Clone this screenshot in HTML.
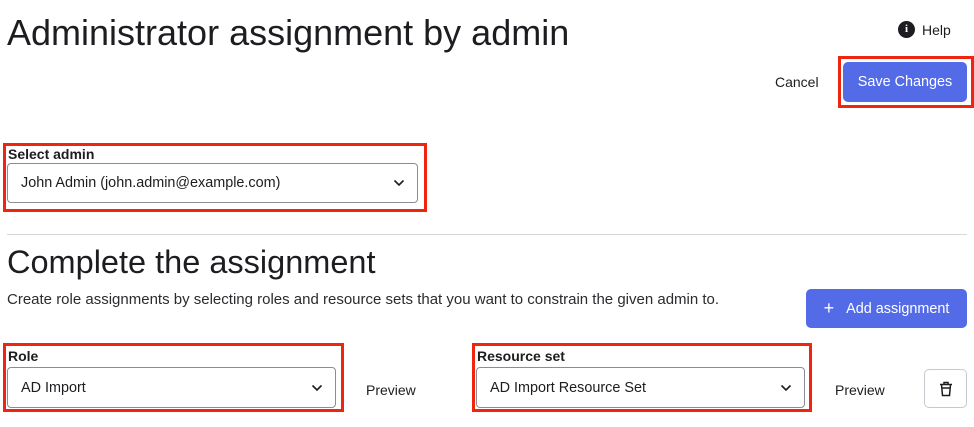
<!DOCTYPE html>
<html><head><style>
*{box-sizing:border-box;margin:0;padding:0}
body{width:974px;height:427px;background:#fff;font-family:"Liberation Sans",sans-serif;color:#1d1d21;position:relative;overflow:hidden}
.a{position:absolute}
.red{position:absolute;border:3px solid #f0250f}
.sel{position:absolute;border:1px solid #8c8c96;border-radius:4px;background:#fff;font-size:14.4px;padding-left:13px;display:flex;align-items:center}
.sel svg{position:absolute;right:12px;top:50%;margin-top:-4px}
.lbl{position:absolute;font-size:14px;font-weight:bold}
.btn{position:absolute;background:#546be7;color:#fff;border-radius:5px;font-size:14.4px;display:flex;align-items:center;justify-content:center}
</style></head><body>
<div class="a" style="left:7px;top:12px;font-size:36px;">Administrator assignment by admin</div>
<div class="a" style="left:898px;top:21px;width:17px;height:17px;border-radius:50%;background:#1d1d21;color:#fff;font-size:11px;font-weight:bold;text-align:center;line-height:17px;font-family:'Liberation Serif',serif">i</div>
<div class="a" style="left:922px;top:22px;font-size:14px">Help</div>
<div class="a" style="left:775px;top:74px;font-size:14px">Cancel</div>
<div class="red" style="left:838px;top:56px;width:136px;height:52px"></div>
<div class="btn" style="left:843px;top:62px;width:124px;height:40px">Save Changes</div>

<div class="red" style="left:3px;top:143px;width:424px;height:69px"></div>
<div class="lbl" style="left:8px;top:146px">Select admin</div>
<div class="sel" style="left:7px;top:163px;width:411px;height:40px">John Admin (john.admin@example.com)<svg width="12" height="8" viewBox="0 0 12 8"><path d="M1.5 1.5 6 6l4.5-4.5" fill="none" stroke="#1d1d21" stroke-width="1.6"/></svg></div>

<div class="a" style="left:7px;top:234px;width:960px;height:1px;background:#d7d7dc"></div>
<div class="a" style="left:7px;top:244px;font-size:32.5px">Complete the assignment</div>
<div class="a" style="left:7px;top:291px;font-size:15px;color:#2b2b30">Create role assignments by selecting roles and resource sets that you want to constrain the given admin to.</div>
<div class="btn" style="left:806px;top:289px;width:161px;height:39px"><span style="font-size:18px;margin-right:12px">+</span>Add assignment</div>

<div class="red" style="left:3px;top:343px;width:341px;height:69px"></div>
<div class="lbl" style="left:8px;top:348px">Role</div>
<div class="sel" style="left:7px;top:367px;width:329px;height:41px">AD Import<svg width="12" height="8" viewBox="0 0 12 8"><path d="M1.5 1.5 6 6l4.5-4.5" fill="none" stroke="#1d1d21" stroke-width="1.6"/></svg></div>
<div class="a" style="left:366px;top:382px;font-size:14px">Preview</div>

<div class="red" style="left:472px;top:343px;width:340px;height:69px"></div>
<div class="lbl" style="left:477px;top:348px">Resource set</div>
<div class="sel" style="left:476px;top:367px;width:329px;height:41px">AD Import Resource Set<svg width="12" height="8" viewBox="0 0 12 8"><path d="M1.5 1.5 6 6l4.5-4.5" fill="none" stroke="#1d1d21" stroke-width="1.6"/></svg></div>
<div class="a" style="left:835px;top:382px;font-size:14px">Preview</div>
<div class="a" style="left:924px;top:369px;width:43px;height:39px;border:1px solid #c8c8cf;border-radius:5px;display:flex;align-items:center;justify-content:center"><svg width="14" height="16" viewBox="0 0 14 16"><path d="M1 3.5h12M5 3.5V1.5h4v2M2.5 3.5l1 11h7l1-11M3 7h8" fill="none" stroke="#1d1d21" stroke-width="1.5"/></svg></div>
</body></html>
